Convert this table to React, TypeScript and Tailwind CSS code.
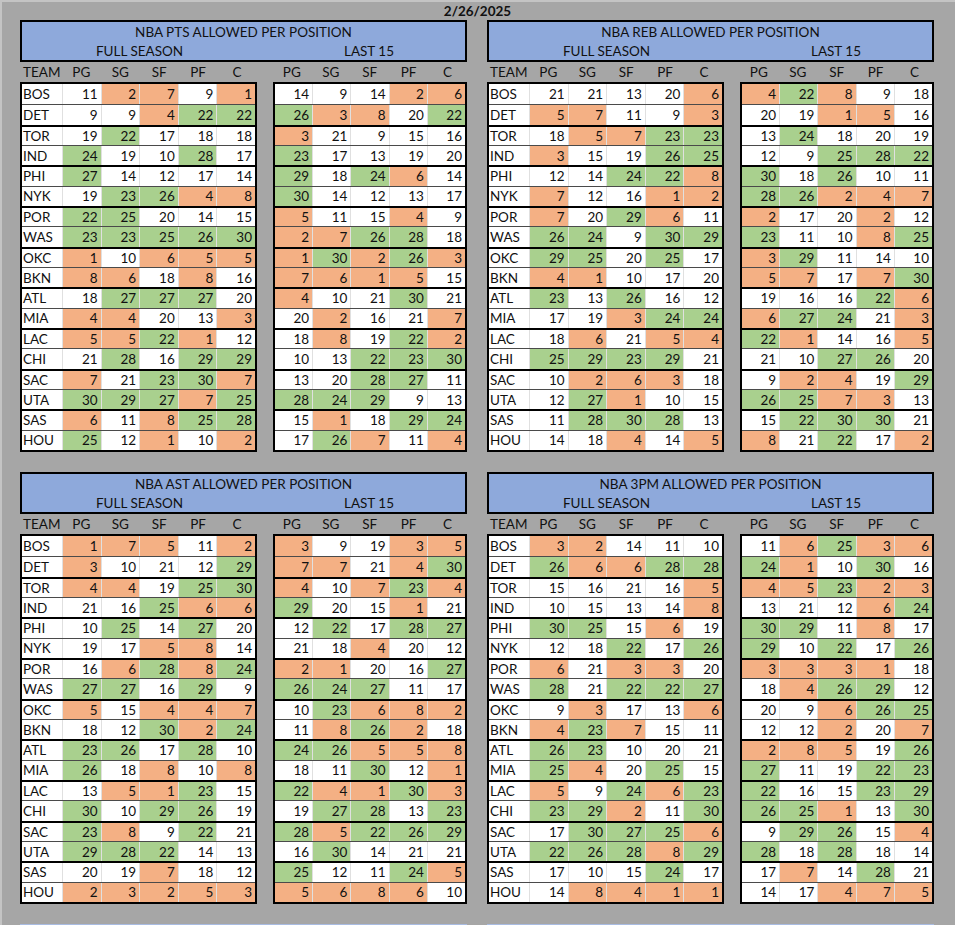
import React from 'react';

type Block = { title: string; rows: string[] };

const TEAMS = ['BOS', 'DET', 'TOR', 'IND', 'PHI', 'NYK', 'POR', 'WAS', 'OKC', 'BKN', 'ATL', 'MIA', 'LAC', 'CHI', 'SAC', 'UTA', 'SAS', 'HOU'];
const POSITIONS = ['PG', 'SG', 'SF', 'PF', 'C'];

// full season | last 15, one line per team in TEAMS order
const BLOCKS: Block[] = [
  {
    title: 'NBA PTS ALLOWED PER POSITION',
    rows: [
      '11 2 7 9 1|14 9 14 2 6',
      '9 9 4 22 22|26 3 8 20 22',
      '19 22 17 18 18|3 21 9 15 16',
      '24 19 10 28 17|23 17 13 19 20',
      '27 14 12 17 14|29 18 24 6 14',
      '19 23 26 4 8|30 14 12 13 17',
      '22 25 20 14 15|5 11 15 4 9',
      '23 23 25 26 30|2 7 26 28 18',
      '1 10 6 5 5|1 30 2 26 3',
      '8 6 18 8 16|7 6 1 5 15',
      '18 27 27 27 20|4 10 21 30 21',
      '4 4 20 13 3|20 2 16 21 7',
      '5 5 22 1 12|18 8 19 22 2',
      '21 28 16 29 29|10 13 22 23 30',
      '7 21 23 30 7|13 20 28 27 11',
      '30 29 27 7 25|28 24 29 9 13',
      '6 11 8 25 28|15 1 18 29 24',
      '25 12 1 10 2|17 26 7 11 4',
    ],
  },
  {
    title: 'NBA REB ALLOWED PER POSITION',
    rows: [
      '21 21 13 20 6|4 22 8 9 18',
      '5 7 11 9 3|20 19 1 5 16',
      '18 5 7 23 23|13 24 18 20 19',
      '3 15 19 26 25|12 9 25 28 22',
      '12 14 24 22 8|30 18 26 10 11',
      '7 12 16 1 2|28 26 2 4 7',
      '7 20 29 6 11|2 17 20 2 12',
      '26 24 9 30 29|23 11 10 8 25',
      '29 25 20 25 17|3 29 11 14 10',
      '4 1 10 17 20|5 7 17 7 30',
      '23 13 26 16 12|19 16 16 22 6',
      '17 19 3 24 24|6 27 24 21 3',
      '18 6 21 5 4|22 1 14 16 5',
      '25 29 23 29 21|21 10 27 26 20',
      '10 2 6 3 18|9 2 4 19 29',
      '12 27 1 10 15|26 25 7 3 13',
      '11 28 30 28 13|15 22 30 30 21',
      '14 18 4 14 5|8 21 22 17 2',
    ],
  },
  {
    title: 'NBA AST ALLOWED PER POSITION',
    rows: [
      '1 7 5 11 2|3 9 19 3 5',
      '3 10 21 12 29|7 7 21 4 30',
      '4 4 19 25 30|4 10 7 23 4',
      '21 16 25 6 6|29 20 15 1 21',
      '10 25 14 27 20|12 22 17 28 27',
      '19 17 5 8 14|21 18 4 20 12',
      '16 6 28 8 24|2 1 20 16 27',
      '27 27 16 29 9|26 24 27 11 17',
      '5 15 4 4 7|10 23 6 8 2',
      '18 12 30 2 24|11 8 26 2 18',
      '23 26 17 28 10|24 26 5 5 8',
      '26 18 8 10 8|18 11 30 12 1',
      '13 5 1 23 15|22 4 1 30 3',
      '30 10 29 26 19|19 27 28 13 23',
      '23 8 9 22 21|28 5 22 26 29',
      '29 28 22 14 13|16 30 14 21 21',
      '20 19 7 18 12|25 12 11 24 5',
      '2 3 2 5 3|5 6 8 6 10',
    ],
  },
  {
    title: 'NBA 3PM ALLOWED PER POSITION',
    rows: [
      '3 2 14 11 10|11 6 25 3 6',
      '26 6 6 28 28|24 1 10 30 16',
      '15 16 21 16 5|4 5 23 2 3',
      '10 15 13 14 8|13 21 12 6 24',
      '30 25 15 6 19|30 29 11 8 17',
      '12 18 22 17 26|29 10 22 17 26',
      '6 21 3 3 20|3 3 3 1 18',
      '28 21 22 22 27|18 4 26 29 12',
      '9 3 17 13 6|20 9 6 26 25',
      '4 23 7 15 11|12 12 2 20 7',
      '26 23 10 20 21|2 8 5 19 26',
      '25 4 20 25 15|27 11 19 22 23',
      '5 9 24 6 23|22 16 15 23 29',
      '23 29 2 11 30|26 25 1 13 30',
      '17 30 27 25 6|9 29 26 15 4',
      '22 26 28 8 29|28 18 28 18 14',
      '17 10 15 24 17|17 7 14 28 21',
      '14 8 4 1 1|14 17 4 7 5',
    ],
  },
];

const parse = (row: string) => row.split('|').map(part => part.split(' ').map(Number));

const cellBg = (v: number) => {
  if (v <= 8) return 'bg-[#f4b084]';
  if (v >= 22) return 'bg-[#a9d08e]';
  return 'bg-white';
};

const rowBorder = (i: number) => {
  if (i === 0) return '';
  return i % 2 === 0 ? 'border-t-2 border-black' : 'border-t border-[#4a4a4a]';
};

function DataTable({ rows, side, withTeam }: { rows: number[][][]; side: number; withTeam: boolean }) {
  return (
    <div className={`${withTeam ? 'w-[237px]' : 'w-[194px]'} h-[370px] border-2 border-black bg-white grid grid-rows-[repeat(18,minmax(0,1fr))]`}>
      {rows.map((r, i) => (
        <div key={i} className={`flex ${rowBorder(i)}`}>
          {withTeam && (
            <div className="w-[40px] pl-[1px] flex items-center bg-white">{TEAMS[i]}</div>
          )}
          {r[side].map((v, j) => (
            <div
              key={j}
              className={`flex-1 flex items-center justify-end pr-[3px] ${cellBg(v)} ${j > 0 || withTeam ? 'border-l border-[#e0e0e0]' : ''}`}
            >
              {v}
            </div>
          ))}
        </div>
      ))}
    </div>
  );
}

function Quadrant({ block }: { block: Block }) {
  const rows = block.rows.map(parse);
  return (
    <div className="w-[447px] flex flex-col">
      <div className="h-[42px] border-2 border-black bg-[#8ea9db] flex flex-col">
        <div className="h-[19px] leading-[20px] text-center">{block.title}</div>
        <div className="h-[19px] leading-[21px] flex">
          <span className="w-[235px] text-center">FULL SEASON</span>
          <span className="w-[16px]" />
          <span className="flex-1 text-center">LAST 15</span>
        </div>
      </div>
      <div className="h-[20px] flex items-center">
        <span className="w-[42px] pl-[3px]">TEAM</span>
        {POSITIONS.map(p => (
          <span key={p} className="w-[39px] text-center">{p}</span>
        ))}
        <span className="w-[16px]" />
        {POSITIONS.map(p => (
          <span key={'l' + p} className="w-[39px] text-center">{p}</span>
        ))}
      </div>
      <div className="flex gap-[16px]">
        <DataTable rows={rows} side={0} withTeam />
        <DataTable rows={rows} side={1} withTeam={false} />
      </div>
    </div>
  );
}

export default function App() {
  return (
    <div className="w-[955px] h-[925px] overflow-hidden bg-[#a6a6a6] border-t-2 border-l-2 border-[#c4c4c4] font-['Lato','Liberation_Sans',sans-serif] text-[13.5px] text-[#111]">
      <div className="h-[18px] leading-[19px] text-center font-bold pr-[2px]">2/26/2025</div>
      <div className="grid grid-cols-[447px_447px] gap-[20px] pl-[18px]">
        {BLOCKS.map(b => (
          <Quadrant key={b.title} block={b} />
        ))}
        <div className="h-[2px] bg-[#a9bce2]" />
        <div className="h-[2px] bg-[#a9bce2]" />
      </div>
    </div>
  );
}
